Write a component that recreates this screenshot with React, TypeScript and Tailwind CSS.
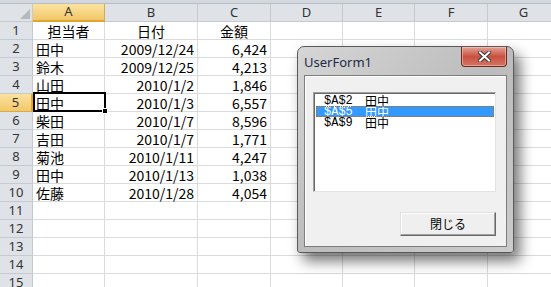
import React from 'react';

const cols = ['A', 'B', 'C', 'D', 'E', 'F', 'G'];

const data: string[][] = [
  ['担当者', '日付', '金額'],
  ['田中', '2009/12/24', '6,424'],
  ['鈴木', '2009/12/25', '4,213'],
  ['山田', '2010/1/2', '1,846'],
  ['田中', '2010/1/3', '6,557'],
  ['柴田', '2010/1/7', '8,596'],
  ['吉田', '2010/1/7', '1,771'],
  ['菊池', '2010/1/11', '4,247'],
  ['田中', '2010/1/13', '1,038'],
  ['佐藤', '2010/1/28', '4,054'],
  [], [], [], [], [],
];

const items = [
  { ref: '$A$2', name: '田中' },
  { ref: '$A$5', name: '田中' },
  { ref: '$A$9', name: '田中' },
];

const cellFont = "[font-family:'Noto_Sans_CJK_JP','Noto_Sans',sans-serif]";

function Sheet() {
  return (
    <div className="flex flex-col">
      <div className="h-[4px] bg-[#d3d8de] border-b border-[#b9bec5]" />
      <div className="grid grid-cols-[33px_72px_93px_73px_72px_72px_73px_72px]">
        {/* header row */}
        <div className="h-[18px] bg-[#dfe3e8] border-r border-b border-[#c5cad1] flex items-end justify-end p-[2px]">
          <div className="w-0 h-0 border-l-[10px] border-l-transparent border-b-[10px] border-b-[#b4b9c0]" />
        </div>
        {cols.map((c) => (
          <div
            key={c}
            className={`h-[18px] border-r border-b flex items-center justify-center text-[13px] text-[#333] [font-family:'Noto_Sans',sans-serif] ${
              c === 'A'
                ? 'bg-gradient-to-b from-[#fbe29f] to-[#f2c868] border-[#d9a94c] border-b-[#e2a42b] border-b-2'
                : 'bg-[#dfe3e8] border-[#c5cad1]'
            }`}
          >
            {c}
          </div>
        ))}
        {data.map((row, i) => {
          const n = i + 1;
          const sel = n === 5;
          return (
            <React.Fragment key={n}>
              <div
                className={`h-[18px] border-r border-b flex items-center justify-center text-[13px] leading-none text-[#333] [font-family:'Noto_Sans',sans-serif] ${
                  sel
                    ? 'bg-gradient-to-b from-[#fbe29f] to-[#f2c868] border-[#d9a94c] border-r-2 border-r-[#e2a42b]'
                    : 'bg-[#dfe3e8] border-[#c5cad1]'
                }`}
              >
                {n}
              </div>
              {cols.map((c, j) => {
                const v = row[j] ?? '';
                const align = n === 1 ? 'justify-center' : j === 0 ? 'justify-start' : 'justify-end';
                return (
                  <div
                    key={c}
                    className={`relative h-[18px] border-r border-b border-[#d9dbdd] flex items-center px-[3px] text-[14px] text-black leading-none ${cellFont} ${align} ${
                      sel && j === 0 ? 'z-10' : ''
                    }`}
                  >
                    {v}
                    {sel && j === 0 && (
                      <div className="absolute left-[0px] top-[-2px] w-[73px] h-[20px] border-[2px] border-black">
                        <div className="absolute right-[-4px] bottom-[-4px] w-[6px] h-[6px] bg-black border border-white" />
                      </div>
                    )}
                  </div>
                );
              })}
            </React.Fragment>
          );
        })}
      </div>
    </div>
  );
}

function CloseButton() {
  return (
    <div className="absolute right-[6px] top-0 w-[46px] h-[20px] rounded-b-[4px] border border-t-0 border-[#6e2a22] bg-gradient-to-b from-[#e2a195] via-[#c9503f] to-[#d47364] flex items-center justify-center shadow-[inset_0_0_0_1px_rgba(255,220,210,0.45)]">
      <svg width="13" height="11" viewBox="0 0 13 11">
        <path d="M2 1.5 L11 9.5 M11 1.5 L2 9.5" stroke="#3a3a3a" strokeWidth="4" strokeLinecap="square" />
        <path d="M2 1.5 L11 9.5 M11 1.5 L2 9.5" stroke="#ffffff" strokeWidth="2" strokeLinecap="square" />
      </svg>
    </div>
  );
}

function Dialog() {
  return (
    <div className="absolute z-20 left-[297px] top-[46px] w-[217px] h-[207px] rounded-t-[7px] rounded-b-[3px] border border-[#5a5a5a] bg-gradient-to-br from-[#d6d6d6] via-[#bcbcbc] to-[#cbcbcb] shadow-[6px_8px_14px_rgba(0,0,0,0.55)] flex flex-col px-[6px] pb-[5px]">
      <CloseButton />
      <div className="h-[28px] flex items-center pt-[3px] text-[13px] text-[#1d2a4a] [font-family:'Noto_Sans',sans-serif]">
        UserForm1
      </div>
      <div className="flex-1 bg-[#f0f0f0] border border-[#7d7d7d] shadow-[inset_1px_1px_0_#ffffff] flex flex-col pl-[8px] pr-[10px] pt-[16px]">
        <div className="h-[100px] bg-white border border-[#a0a0a0] border-r-[#e3e3e3] border-b-[#e3e3e3] shadow-[inset_1px_1px_0_#696969] pt-[2px] pl-[2px] pr-[1px]">
          {items.map((it, i) => {
            const sel = i === 1;
            return (
              <div
                key={i}
                className={`h-[11px] flex items-center leading-none text-[12px] ${
                  sel ? 'bg-[#3399ff] text-white outline-1 outline-dotted outline-[#c46a00] -outline-offset-1' : 'text-black'
                }`}
              >
                <span className="w-[49px] pl-[8px] [font-family:'Liberation_Mono',monospace] text-[12px]">{it.ref}</span>
                <span className="[font-family:'Noto_Sans_CJK_JP',sans-serif] text-[12px]">{it.name}</span>
              </div>
            );
          })}
        </div>
        <div className="flex justify-end mt-[20px]">
          <div className="w-[96px] h-[24px] bg-[#efefef] border border-[#6a6a6a] border-t-[#e0e0e0] border-l-[#e0e0e0] shadow-[inset_-1px_-1px_0_#a0a0a0,inset_1px_1px_0_#ffffff] flex items-center justify-center text-[12px] text-black [font-family:'Noto_Sans_CJK_JP',sans-serif]">
            閉じる
          </div>
        </div>
      </div>
    </div>
  );
}

export default function App() {
  return (
    <div className="relative w-[551px] h-[287px] overflow-hidden bg-white">
      <Sheet />
      <Dialog />
    </div>
  );
}
